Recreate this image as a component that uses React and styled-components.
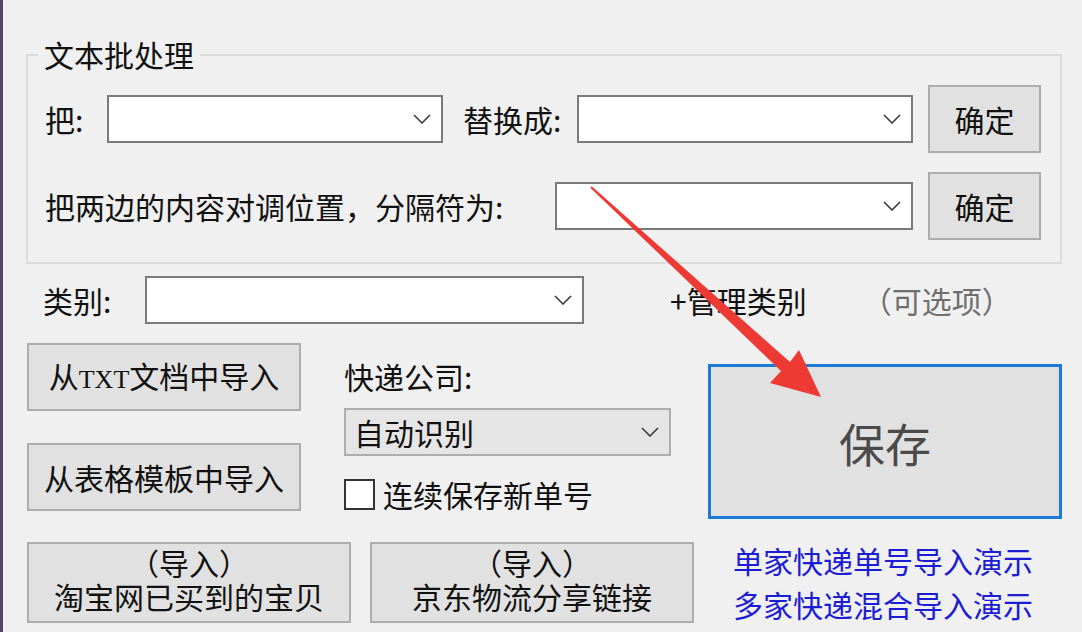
import React from "react";
import styled, { createGlobalStyle } from "styled-components";

const GlobalStyle = createGlobalStyle`
  html, body { margin: 0; padding: 0; background: #f0f0f0; }
  body { width: 1082px; height: 632px; overflow: hidden; }
`;

const Window = styled.div`
  position: relative;
  width: 1082px;
  height: 632px;
  box-sizing: border-box;
  border-left: 3px solid #55466b;
  background: #f0f0f0;
  display: flex;
  flex-direction: column;
  padding-top: 54px;
  font-family: "Noto Sans CJK SC", "Noto Sans", sans-serif;
  font-size: 30px;
  color: #111;
`;

const GroupBox = styled.section`
  margin-left: 23px;
  width: 1036px;
  height: 210px;
  box-sizing: border-box;
  border: 2px solid #dcdcdc;
  display: flex;
  flex-direction: column;
  padding-left: 17px;
`;

const Legend = styled.div`
  align-self: flex-start;
  margin-top: -19px;
  margin-left: -7px;
  padding: 0 6px;
  background: #f0f0f0;
  line-height: 34px;
`;

const Row = styled.div`
  display: flex;
  align-items: center;
  height: ${(p) => p.$h || 68}px;
  margin-top: ${(p) => p.$mt || 0}px;
  padding-left: ${(p) => p.$pl || 0}px;
`;

const Label = styled.span`
  flex: none;
  width: ${(p) => (p.$w ? `${p.$w}px` : "auto")};
  margin-left: ${(p) => p.$ml || 0}px;
  margin-top: ${(p) => p.$mt || 0}px;
  line-height: 34px;
  white-space: nowrap;
  color: ${(p) => (p.$muted ? "#6e6e6e" : "#111")};
`;

const Combo = styled.div`
  flex: none;
  width: ${(p) => p.$w}px;
  height: 48px;
  box-sizing: border-box;
  border: 2px solid ${(p) => (p.$readonly ? "#adadad" : "#7a7a7a")};
  background: ${(p) => (p.$readonly ? "#e5e5e5" : "#ffffff")};
  display: flex;
  align-items: center;
  justify-content: space-between;
  padding: 0 10px 0 8px;
  margin-top: ${(p) => p.$mt || 0}px;
  line-height: 34px;
  white-space: nowrap;
`;

const Btn = styled.button`
  flex: none;
  width: ${(p) => p.$w}px;
  height: ${(p) => p.$h}px;
  margin-left: ${(p) => p.$ml || 0}px;
  box-sizing: border-box;
  border: 2px solid #adadad;
  background: #e1e1e1;
  padding: 0;
  font-family: inherit;
  font-size: 30px;
  color: #111;
  line-height: 34px;
  display: flex;
  align-items: center;
  justify-content: center;
  white-space: nowrap;
`;

const SerifLatin = styled.span`
  font-family: "Liberation Serif", "DejaVu Serif", serif;
  font-size: 26px;
`;

const Lines = styled.span`
  display: flex;
  flex-direction: column;
  align-items: center;
  line-height: 34px;
  margin-top: -6px;
`;

const MidSection = styled.div`
  display: flex;
  align-items: flex-start;
  margin-top: 19px;
  padding-left: 24px;
`;

const LeftCol = styled.div`
  display: flex;
  flex-direction: column;
  gap: 32px;
  width: 274px;
`;

const MidCol = styled.div`
  display: flex;
  flex-direction: column;
  width: 327px;
  margin-left: 43px;
`;

const CheckRow = styled.label`
  display: flex;
  align-items: center;
  height: 34px;
  margin-top: 21px;
  white-space: nowrap;
`;

const CheckBox = styled.span`
  width: 31px;
  height: 31px;
  box-sizing: border-box;
  border: 2px solid #333;
  background: #fff;
  margin-right: 8px;
  flex: none;
`;

const SaveButton = styled.button`
  margin-left: 37px;
  margin-top: 21px;
  width: 354px;
  height: 155px;
  box-sizing: border-box;
  border: 3px solid #1a7bd6;
  background: #e1e1e1;
  font-family: "Noto Sans CJK SC", sans-serif;
  font-size: 46px;
  color: #4a4a4a;
  padding: 0;
`;

const BottomRow = styled.div`
  display: flex;
  align-items: center;
  margin-top: 19px;
  padding-left: 24px;
`;

const Links = styled.div`
  display: flex;
  flex-direction: column;
  margin-left: 39px;
  width: 300px;
  line-height: 44px;
  color: #1c1cd4;
  white-space: nowrap;
`;

const Overlay = styled.svg`
  position: absolute;
  left: -3px;
  top: 0;
  width: 1082px;
  height: 632px;
  pointer-events: none;
`;

const Chevron = () => (
  <svg width="18" height="10" viewBox="0 0 18 10">
    <polyline points="1,1 9,9 17,1" fill="none" stroke="#3c3c3c" strokeWidth="1.6" />
  </svg>
);

export default function App() {
  return (
    <>
      <GlobalStyle />
      <Window>
        <GroupBox>
          <Legend>文本批处理</Legend>
          <Row $mt={14}>
            <Label $w={62}>把:</Label>
            <Combo $w={336}><span /><Chevron /></Combo>
            <Label $w={114} $ml={20}>替换成:</Label>
            <Combo $w={336}><span /><Chevron /></Combo>
            <Btn $w={113} $h={68} $ml={15}>确定</Btn>
          </Row>
          <Row $mt={19}>
            <Label $w={510}>把两边的内容对调位置，分隔符为:</Label>
            <Combo $w={358}><span /><Chevron /></Combo>
            <Btn $w={113} $h={68} $ml={15}>确定</Btn>
          </Row>
        </GroupBox>

        <Row $h={48} $mt={12} $pl={40}>
          <Label $w={102}>类别:</Label>
          <Combo $w={439}><span /><Chevron /></Combo>
          <Label $ml={86}>+管理类别</Label>
          <Label $ml={55} $muted>（可选项）</Label>
        </Row>

        <MidSection>
          <LeftCol>
            <Btn $w={274} $h={68}>
              <span>从<SerifLatin>TXT</SerifLatin>文档中导入</span>
            </Btn>
            <Btn $w={274} $h={68}>从表格模板中导入</Btn>
          </LeftCol>
          <MidCol>
            <Label $mt={16}>快递公司:</Label>
            <Combo $w={327} $readonly $mt={15}>
              <span>自动识别</span>
              <Chevron />
            </Combo>
            <CheckRow>
              <CheckBox />
              连续保存新单号
            </CheckRow>
          </MidCol>
          <SaveButton>保存</SaveButton>
        </MidSection>

        <BottomRow>
          <Btn $w={324} $h={81}>
            <Lines><span>（导入）</span><span>淘宝网已买到的宝贝</span></Lines>
          </Btn>
          <Btn $w={324} $h={81} $ml={19}>
            <Lines><span>（导入）</span><span>京东物流分享链接</span></Lines>
          </Btn>
          <Links>
            <span>单家快递单号导入演示</span>
            <span>多家快递混合导入演示</span>
          </Links>
        </BottomRow>

        <Overlay viewBox="0 0 1082 632">
          <polygon
            points="590.3,187.7 591.7,186.3 790,362 799,350 821,397 770,383 781,371"
            fill="#ee3a35"
          />
        </Overlay>
      </Window>
    </>
  );
}
